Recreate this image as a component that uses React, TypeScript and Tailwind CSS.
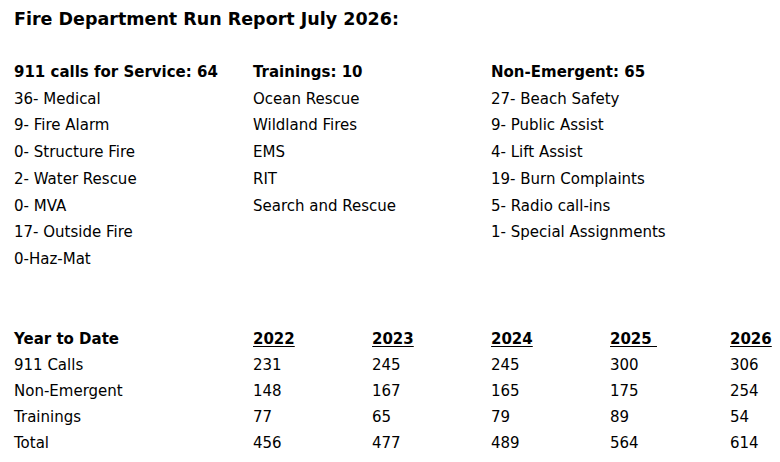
import React from "react";

const col1 = ["36- Medical", "9- Fire Alarm", "0- Structure Fire", "2- Water Rescue", "0- MVA", "17- Outside Fire", "0-Haz-Mat"];
const col2 = ["Ocean Rescue", "Wildland Fires", "EMS", "RIT", "Search and Rescue"];
const col3 = ["27- Beach Safety", "9- Public Assist", "4- Lift Assist", "19- Burn Complaints", "5- Radio call-ins", "1- Special Assignments"];

const years = ["2022", "2023", "2024", "2025\u00a0", "2026"];
const rows: [string, string[]][] = [
  ["911 Calls", ["231", "245", "245", "300", "306"]],
  ["Non-Emergent", ["148", "167", "165", "175", "254"]],
  ["Trainings", ["77", "65", "79", "89", "54"]],
  ["Total", ["456", "477", "489", "564", "614"]],
];

export default function App() {
  return (
    <div
      className="w-[780px] h-[462px] bg-white text-black pl-[14px] pt-[8px] overflow-hidden"
      style={{ fontFamily: '"Comic Sans MS", "DejaVu Sans", sans-serif' }}
    >
      <div className="text-[17.5px] font-bold leading-[22px]">Fire Department Run Report July 2026:</div>
      <div className="mt-[29px] grid grid-cols-[239px_238px_1fr] text-[15px] leading-[26.7px]">
        <div>
          <div className="font-bold">911 calls for Service: 64</div>
          {col1.map((t) => (
            <div key={t}>{t}</div>
          ))}
        </div>
        <div>
          <div className="font-bold">Trainings: 10</div>
          {col2.map((t) => (
            <div key={t}>{t}</div>
          ))}
        </div>
        <div>
          <div className="font-bold">Non-Emergent: 65</div>
          {col3.map((t) => (
            <div key={t}>{t}</div>
          ))}
        </div>
      </div>
      <div className="mt-[53px] grid grid-cols-[239px_119px_119px_119px_120px_1fr] text-[15px] leading-[26.2px]">
        <div className="font-bold">Year to Date</div>
        {years.map((y) => (
          <div key={y} className="font-bold">
            <span className="underline underline-offset-2">{y}</span>
          </div>
        ))}
        {rows.map(([label, vals]) => (
          <React.Fragment key={label}>
            <div>{label}</div>
            {vals.map((v, i) => (
              <div key={i}>{v}</div>
            ))}
          </React.Fragment>
        ))}
      </div>
    </div>
  );
}
